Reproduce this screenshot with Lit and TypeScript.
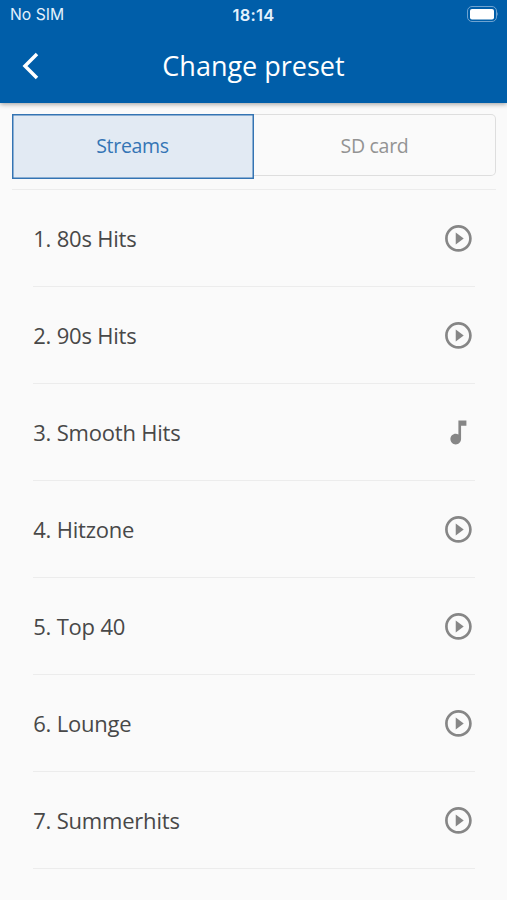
import { LitElement, html, css, svg } from "lit";
import { customElement, property } from "lit/decorators.js";

@customElement("preset-row")
class PresetRow extends LitElement {
  @property() label = "";
  @property({ type: Boolean }) playing = false;
  static styles = css`
    :host { display: flex; align-items: center; justify-content: space-between; height: 96px; border-bottom: 1px solid #ececec; font-size: 22px; letter-spacing: -.2px; color: #484848; }
    .label { line-height: 30px; white-space: nowrap; }
    .icon { width: 32px; height: 32px; fill: #868686; display: block; margin-right: 1px; }
  `;
  render() {
    return html`<span class="label">${this.label}</span>
      <svg class="icon" viewBox="-.3 -.3 24 24">${this.playing
        ? svg`<path d="M12 3v10.550c-.590-.340-1.270-.550-2-.550-2.210 0-4 1.790-4 4s1.790 4 4 4 4-1.790 4-4V7h4V3h-6z"/>`
        : svg`<path d="M10 16.500l6-4.500-6-4.500v9zM12 2C6.480 2 2 6.480 2 12s4.480 10 10 10 10-4.480 10-10S17.520 2 12 2zm0 18c-4.410 0-8-3.590-8-8s3.590-8 8-8 8 3.590 8 8-3.590 8-8 8z"/>`}</svg>`;
  }
}

@customElement("app-root")
class AppRoot extends LitElement {
  static styles = css`
    :host { display: block; height: 900px; overflow: hidden; background: #fafafa; font-family: "Open Sans", sans-serif; }
    .head { height: 103px; background: #005ea9; color: #fff; box-shadow: 0 1px 5px rgba(0,0,0,.4); }
    .status { height: 30px; display: grid; grid-template-columns: 1fr 1fr 1fr; align-items: center; padding: 0 9px 0 10px; font: 15.700px/30px Inter, sans-serif; color: #e3f1fc; }
    .time { text-align: center; font-weight: 600; font-size: 16.500px; letter-spacing: .2px; padding-right: 1px; }
    .battery { justify-self: end; display: block; margin-bottom: 2px; }
    .bar { height: 73px; display: grid; grid-template-columns: 60px 1fr 60px; align-items: center; }
    .back { display: block; margin: 0 0 2px 20px; }
    .title { text-align: center; font-size: 27px; line-height: 71px; height: 73px; }
    .tabs { margin: 11px 11px 10px 12px; height: 65px; display: flex; font-size: 19.500px; letter-spacing: -.3px; }
    .tab { box-sizing: border-box; display: flex; align-items: center; justify-content: center; }
    .on { width: 242px; background: #e2eaf3; border: 1px solid #3474b3; box-shadow: inset 0 0 0 .500px #3474b3; color: #3475b5; padding: 0 1px 2px 0; }
    .off { flex: 1; height: 62px; border: 1px solid #dedede; border-left: 0; border-radius: 0 5px 5px 0; color: #939393; }
    .rule { margin: 0 11px 0 12px; height: 1px; background: #ececec; }
    .list { padding: 0 32px 0 33.200px; }
  `;
  render() {
    const names = ["80s Hits", "90s Hits", "Smooth Hits", "Hitzone", "Top 40", "Lounge", "Summerhits"];
    return html`
      <div class="head">
        <div class="status"><span>No SIM</span><span class="time">18:14</span>
          <svg class="battery" width="31" height="16"><rect x=".5" y=".5" width="29" height="15" rx="4.500" fill="none" stroke="#6fa3d0"/><rect x="3" y="3" width="24" height="10.500" rx="2" fill="#fff"/><path d="M30 6q1.500 2 0 4z" fill="#6fa3d0"/></svg></div>
        <div class="bar"><svg class="back" width="22" height="28"><path d="M17 2L5 14l12 12" fill="none" stroke="#fff" stroke-width="3.500"/></svg><span class="title">Change preset</span></div>
      </div>
      <div class="tabs"><div class="tab on">Streams</div><div class="tab off">SD card</div></div>
      <div class="rule"></div>
      <div class="list">${names.map((n, i) => html`<preset-row .label=${`${i + 1}. ${n}`} .playing=${i === 2}></preset-row>`)}</div>`;
  }
}
